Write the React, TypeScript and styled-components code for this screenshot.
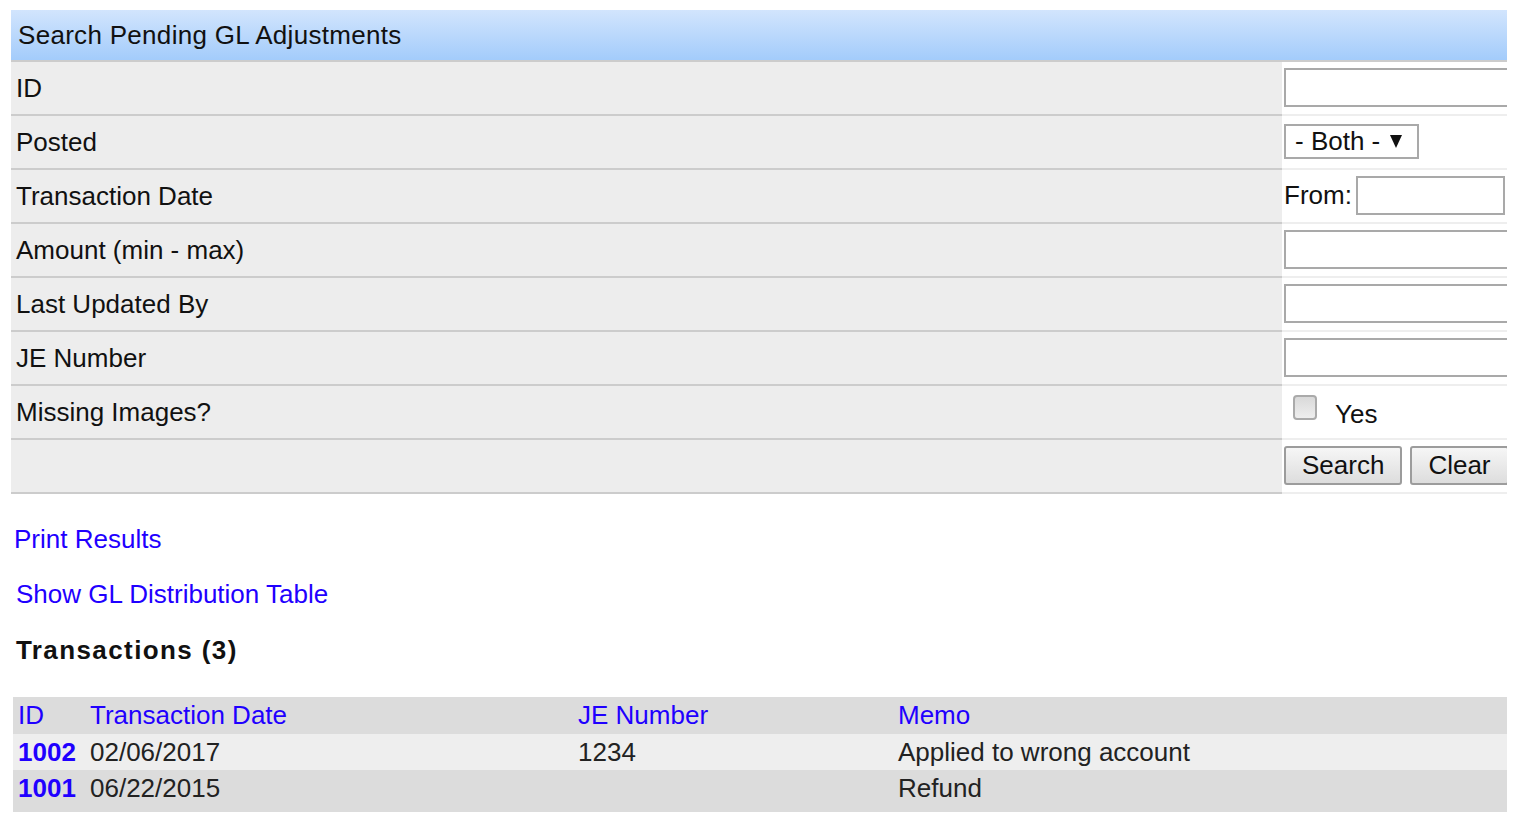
import { createGlobalStyle, styled } from "styled-components"

const GlobalStyle = createGlobalStyle`
  body {
    margin: 0;
    background: #fff;
    font-family: "Liberation Sans", Arial, sans-serif;
    color: #111;
  }
`

const Page = styled.div`
  width: 1496px;
  padding: 10px 0 0 11px;
`

const SearchPanel = styled.section`
  width: 1496px;
  overflow: hidden;
`

const PanelHeader = styled.div`
  height: 50px;
  display: flex;
  align-items: center;
  padding-left: 7px;
  font-size: 26px;
  letter-spacing: 0.3px;
  background: linear-gradient(to bottom, #d2e5fd, #a3ccfb);
  border-bottom: 2px solid #cccccc;
`

const FormRow = styled.div`
  display: grid;
  grid-template-columns: 1271px 225px;
  height: 54px;
`

const LabelCell = styled.div`
  display: flex;
  align-items: center;
  padding-left: 5px;
  font-size: 26px;
  background: #ededed;
  border-bottom: 2px solid #cccccc;
`

const FieldCell = styled.div`
  display: flex;
  align-items: center;
  padding: 0 0 2px 2px;
  background: #fff;
  border-bottom: 2px solid #eeeeee;
  font-size: 26px;
  white-space: nowrap;
`

const TextInput = styled.input<{ $w?: number }>`
  box-sizing: border-box;
  width: ${(p) => p.$w ?? 240}px;
  height: 39px;
  border: 2px solid #a9a9a9;
  background: #fff;
  font: inherit;
  padding: 0 4px;
  margin: 0;
  outline: none;
`

const SelectBox = styled.div`
  box-sizing: border-box;
  display: flex;
  align-items: center;
  gap: 10px;
  width: 135px;
  height: 35px;
  padding-left: 9px;
  border: 2px solid #a9a9a9;
  font-size: 26px;
`

const FromLabel = styled.span`
  margin-right: 4px;
`

const CheckBox = styled.span`
  box-sizing: border-box;
  display: inline-block;
  width: 24px;
  height: 25px;
  margin: 0 18px 0 9px;
  border: 2px solid #aaaaaa;
  border-radius: 4px;
  background: linear-gradient(to bottom, #d9d9d9, #eeeeee);
  position: relative;
  top: -4px;
`

const YesText = styled.span`
  position: relative;
  top: 3px;
`

const ButtonRow = styled.div`
  display: flex;
  gap: 8px;
`

const Button = styled.button`
  box-sizing: border-box;
  height: 39px;
  padding: 0 16px;
  border: 2px solid #9c9c9c;
  border-radius: 3px;
  background: linear-gradient(to bottom, #f6f6f6, #dddddd);
  font-family: "Liberation Sans", Arial, sans-serif;
  font-size: 26px;
  color: #111;
`

const Results = styled.div`
  display: flex;
  flex-direction: column;
  align-items: flex-start;
`

const ActionLink = styled.a<{ $top: number; $left: number }>`
  margin-top: ${(p) => p.$top}px;
  margin-left: ${(p) => p.$left}px;
  font-size: 26px;
  line-height: 30px;
  color: #1f00ff;
  text-decoration: none;
  cursor: pointer;
`

const Heading = styled.h3`
  margin: 26px 0 0 5px;
  font-size: 26px;
  line-height: 30px;
  font-weight: bold;
  letter-spacing: 1.4px;
`

const TableWrap = styled.div`
  margin: 32px 0 0 2px;
  width: 1494px;
  padding-bottom: 6px;
  background: #dcdcdc;
`

const Table = styled.table`
  width: 100%;
  border-collapse: collapse;
  table-layout: fixed;
  font-size: 26px;
`

const HeadRow = styled.tr`
  height: 37px;
  background: #dcdcdc;
`

const BodyRow = styled.tr<{ $alt?: boolean }>`
  height: 36px;
  background: ${(p) => (p.$alt ? "#dcdcdc" : "#eeeeee")};
`

const Th = styled.th<{ $w?: number }>`
  width: ${(p) => (p.$w ? `${p.$w}px` : "auto")};
  padding: 0 0 0 5px;
  text-align: left;
  font-weight: normal;
  color: #1f00ff;
`

const Td = styled.td<{ $link?: boolean }>`
  padding: 0 0 0 5px;
  color: ${(p) => (p.$link ? "#1f00ff" : "#222")};
  font-weight: ${(p) => (p.$link ? "bold" : "normal")};
  white-space: nowrap;
`

function Arrow() {
  return (
    <svg width="12" height="13" viewBox="0 0 12 13">
      <path d="M0 0 H12 L6 13 Z" fill="#111" />
    </svg>
  )
}

const transactions = [
  { id: "1002", date: "02/06/2017", je: "1234", memo: "Applied to wrong account" },
  { id: "1001", date: "06/22/2015", je: "", memo: "Refund" },
]

export default function App() {
  return (
    <>
      <GlobalStyle />
      <Page>
        <SearchPanel>
          <PanelHeader>Search Pending GL Adjustments</PanelHeader>
          <FormRow>
            <LabelCell>ID</LabelCell>
            <FieldCell>
              <TextInput />
            </FieldCell>
          </FormRow>
          <FormRow>
            <LabelCell>Posted</LabelCell>
            <FieldCell>
              <SelectBox>
                - Both -
                <Arrow />
              </SelectBox>
            </FieldCell>
          </FormRow>
          <FormRow>
            <LabelCell>Transaction Date</LabelCell>
            <FieldCell>
              <FromLabel>From:</FromLabel>
              <TextInput $w={149} />
            </FieldCell>
          </FormRow>
          <FormRow>
            <LabelCell>Amount (min - max)</LabelCell>
            <FieldCell>
              <TextInput />
            </FieldCell>
          </FormRow>
          <FormRow>
            <LabelCell>Last Updated By</LabelCell>
            <FieldCell>
              <TextInput />
            </FieldCell>
          </FormRow>
          <FormRow>
            <LabelCell>JE Number</LabelCell>
            <FieldCell>
              <TextInput />
            </FieldCell>
          </FormRow>
          <FormRow>
            <LabelCell>Missing Images?</LabelCell>
            <FieldCell>
              <CheckBox />
              <YesText>Yes</YesText>
            </FieldCell>
          </FormRow>
          <FormRow>
            <LabelCell />
            <FieldCell>
              <ButtonRow>
                <Button>Search</Button>
                <Button>Clear</Button>
              </ButtonRow>
            </FieldCell>
          </FormRow>
        </SearchPanel>

        <Results>
          <ActionLink $top={30} $left={3}>Print Results</ActionLink>
          <ActionLink $top={25} $left={5}>Show GL Distribution Table</ActionLink>
          <Heading>Transactions (3)</Heading>
          <TableWrap>
            <Table>
              <thead>
                <HeadRow>
                  <Th $w={67}>ID</Th>
                  <Th $w={483}>Transaction Date</Th>
                  <Th $w={315}>JE Number</Th>
                  <Th>Memo</Th>
                </HeadRow>
              </thead>
              <tbody>
                {transactions.map((t, i) => (
                  <BodyRow key={t.id} $alt={i % 2 === 1}>
                    <Td $link>{t.id}</Td>
                    <Td>{t.date}</Td>
                    <Td>{t.je}</Td>
                    <Td>{t.memo}</Td>
                  </BodyRow>
                ))}
              </tbody>
            </Table>
          </TableWrap>
        </Results>
      </Page>
    </>
  )
}
